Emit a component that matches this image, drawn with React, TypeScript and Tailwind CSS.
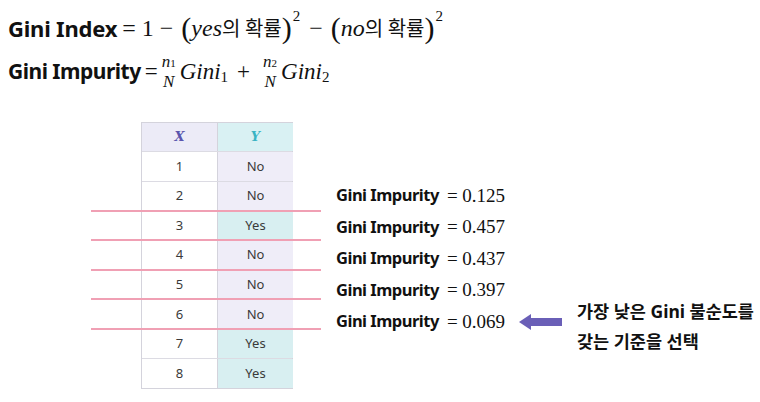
import React from 'react';

const sans = { fontFamily: '"Noto Sans", "Noto Sans CJK KR", sans-serif' };
const serif = { fontFamily: '"DejaVu Serif", "Liberation Serif", serif' };
const math = { fontFamily: '"Liberation Serif", "Noto Sans CJK KR", serif' };
const kr = { fontFamily: '"Noto Sans CJK KR", sans-serif' };

const rows: { x: number; y: 'No' | 'Yes' }[] = [
    { x: 1, y: 'No' },
    { x: 2, y: 'No' },
    { x: 3, y: 'Yes' },
    { x: 4, y: 'No' },
    { x: 5, y: 'No' },
    { x: 6, y: 'No' },
    { x: 7, y: 'Yes' },
    { x: 8, y: 'Yes' },
];

const impurities = ['0.125', '0.457', '0.437', '0.397', '0.069'];
const lineTops = [88, 117, 147, 176, 206];

function Frac({ sub }: { sub: string }) {
    return (
        <span className="inline-flex flex-col items-center leading-none text-[17px] mx-[4px] -translate-y-[1px]">
            <span className="italic">
                n<span className="not-italic text-[11px]">{sub}</span>
            </span>
            <span className="italic pt-[3px]">N</span>
        </span>
    );
}

export default function App() {
    return (
        <div className="w-[760px] h-[402px] bg-white relative overflow-hidden text-[#111]">
            {/* formulas */}
            <div className="h-[44px] pt-[12px] pl-[8px] flex items-center">
                <span className="font-bold text-[22px] tracking-[-0.2px]" style={sans}>Gini Index</span>
                <span className="text-[24px] flex items-center" style={math}>
                    <span className="ml-[5px]">= 1 −</span>
                    <span className="text-[30px] ml-[8px] leading-none">(</span>
                    <span className="italic">yes</span>
                    <span className="text-[20px]" style={kr}>의 확률</span>
                    <span className="text-[30px] leading-none">)</span>
                    <span className="text-[15px] self-start -mt-[5px] ml-[1px]">2</span>
                    <span className="ml-[9px]">−</span>
                    <span className="text-[30px] ml-[8px] leading-none">(</span>
                    <span className="italic">no</span>
                    <span className="text-[20px]" style={kr}>의 확률</span>
                    <span className="text-[30px] leading-none">)</span>
                    <span className="text-[15px] self-start -mt-[5px] ml-[1px]">2</span>
                </span>
            </div>
            <div className="h-[56px] pl-[8px] flex items-center">
                <span className="font-bold text-[21px] tracking-[-0.5px]" style={sans}>Gini Impurity</span>
                <span className="text-[23px] flex items-center" style={math}>
                    <span className="ml-[4px]">=</span>
                    <Frac sub="1" />
                    <span className="italic">Gini</span>
                    <span className="text-[15px] translate-y-[5px]">1</span>
                    <span className="mx-[9px]">+</span>
                    <Frac sub="2" />
                    <span className="italic">Gini</span>
                    <span className="text-[15px] translate-y-[5px]">2</span>
                </span>
            </div>

            {/* table + impurities */}
            <div className="relative mt-[22px] flex">
                <div className="ml-[141px] w-[152px] border border-[#d4d3dc] text-[13px] text-[#3a3a3a]" style={sans}>
                    <div className="grid grid-cols-[76px_75px] h-[28px]">
                        <div className="bg-[#ecebf7] border-r border-[#d4d3dc] flex items-center justify-center italic font-bold text-[#5a55ad]" style={serif}>X</div>
                        <div className="bg-[#d9f1f3] flex items-center justify-center italic font-bold text-[#3ab4c4]" style={serif}>Y</div>
                    </div>
                    {rows.map((r) => (
                        <div key={r.x} className="grid grid-cols-[76px_75px] h-[29.6px] border-t border-[#dcdbe3]">
                            <div className="bg-white border-r border-[#d4d3dc] flex items-center justify-center">{r.x}</div>
                            <div className={`${r.y === 'Yes' ? 'bg-[#d8eff1]' : 'bg-[#efedf8]'} flex items-center justify-center`}>{r.y}</div>
                        </div>
                    ))}
                </div>

                <div className="ml-[43px] w-[183px] pt-[58px] flex flex-col">
                    {impurities.map((v) => (
                        <div key={v} className="h-[31.5px] flex items-center whitespace-nowrap">
                            <span className="font-bold text-[16.5px] tracking-[-0.5px]" style={sans}>Gini Impurity</span>
                            <span className="text-[19px] ml-[8px]" style={math}>= {v}</span>
                        </div>
                    ))}
                </div>

                <div className="pt-[192px] flex">
                    <svg width="43" height="16" viewBox="0 0 43 16">
                        <path d="M0 8 L12 0 L12 4 L43 4 L43 12 L12 12 L12 16 Z" fill="#6a5fb7" />
                    </svg>
                    <div className="ml-[15px] -mt-[18px] font-bold text-[17.5px] leading-[30px] whitespace-nowrap" style={sans}>
                        <div>가장 낮은 Gini 불순도를</div>
                        <div>갖는 기준을 선택</div>
                    </div>
                </div>

                {/* split lines */}
                {lineTops.map((t) => (
                    <div key={t} className="absolute left-[91px] w-[230px] h-[2px] bg-[#f0a0b4]" style={{ top: t }} />
                ))}
            </div>
        </div>
    );
}
